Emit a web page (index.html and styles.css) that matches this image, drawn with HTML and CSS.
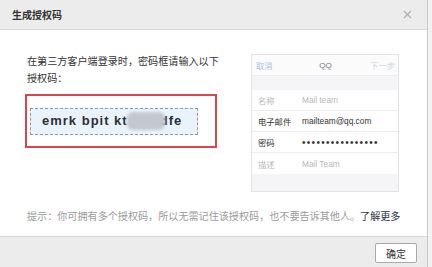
FILE: index.html
```html
<!DOCTYPE html>
<html lang="zh-CN">
<head>
<meta charset="utf-8">
<link rel="stylesheet" href="styles.css">
</head>
<body>
<div class="dialog">
  <div class="dlg-header">
    <span class="dlg-title">生成授权码</span>
    <svg class="dlg-close" width="9" height="9" viewBox="0 0 9 9"><path d="M1 1L8 8M8 1L1 8" stroke="#b0b0b0" stroke-width="1.2" fill="none"/></svg>
  </div>
  <div class="dlg-body">
    <div class="main">
      <div class="left">
        <p class="intro">在第三方客户端登录时，密码框请输入以下授权码：</p>
        <div class="code-frame">
          <div class="code-box"><span class="code-text">emrk bpit kt<span class="blob"></span>dfe</span></div>
        </div>
      </div>
      <div class="phone">
        <div class="phone-bar">
          <span class="bar-cancel">取消</span>
          <span class="bar-title">QQ</span>
          <span class="bar-next">下一步</span>
        </div>
        <div class="phone-gap"></div>
        <div class="row muted"><span class="lbl">名称</span><span class="val">Mail team</span></div>
        <div class="row"><span class="lbl">电子邮件</span><span class="val">mailteam@qq.com</span></div>
        <div class="row"><span class="lbl">密码</span><span class="val dots">••••••••••••••••</span></div>
        <div class="row muted last"><span class="lbl">描述</span><span class="val">Mail Team</span></div>
      </div>
    </div>
    <p class="hint">提示：你可拥有多个授权码，所以无需记住该授权码，也不要告诉其他人。<a class="more">了解更多</a></p>
  </div>
  <div class="dlg-footer">
    <button class="btn-ok">确定</button>
  </div>
</div>
</body>
</html>
```
FILE: styles.css
```css
* { box-sizing: border-box; }
html, body { margin: 0; padding: 0; }
body {
  background: #f2f2f2;
  font-family: "Noto Sans CJK SC", "Liberation Sans", sans-serif;
  width: 432px;
  height: 267px;
  overflow: hidden;
}
.dialog {
  width: 428px;
  height: 267px;
  background: #fff;
  border-right: 1px solid #c9c9c9;
  display: flex;
  flex-direction: column;
}
.dlg-header {
  height: 30px;
  background: #ececec;
  border-bottom: 1px solid #d6d6d6;
  display: flex;
  align-items: center;
  justify-content: space-between;
  padding: 0 12px 0 12px;
}
.dlg-title {
  font-size: 10px;
  font-weight: bold;
  color: #333;
}
.dlg-close { margin-right: 3px; }
.dlg-body {
  height: 206px;
  display: flex;
  flex-direction: column;
}
.main {
  display: flex;
  align-items: flex-start;
}
.left {
  margin-left: 25px;
  margin-top: 22px;
  width: 196px;
}
.intro {
  margin: 0;
  padding-left: 2px;
  font-size: 10.1px;
  line-height: 17px;
  color: #333;
}
.code-frame {
  margin-top: 8px;
  width: 192px;
  height: 54px;
  border: 2px solid #d9474c;
  padding: 12px 17px 0 3px;
}
.code-box {
  width: 168px;
  height: 27px;
  border: 1px dashed #8a9aab;
  background: #eaf3fa;
  display: flex;
  align-items: center;
  padding-left: 11px;
}
.code-text {
  font-family: "Liberation Sans", sans-serif;
  font-weight: bold;
  font-size: 13px;
  letter-spacing: 1px;
  color: #2b2f36;
  white-space: nowrap;
}
.blob {
  display: inline-block;
  width: 38px;
  height: 18px;
  margin-left: -1px;
  margin-right: -5px;
  vertical-align: middle;
  background: #c3c8cd;
  border-radius: 6px;
  filter: blur(1.5px);
  position: relative;
  z-index: 1;
  top: -1px;
}
.phone {
  margin-left: auto;
  margin-right: 28px;
  margin-top: 24px;
  width: 148px;
  height: 138px;
  border: 1px solid #e4e4e4;
  background: #f5f5f7;
  font-family: "Liberation Sans", "Noto Sans CJK SC", sans-serif;
  font-size: 8.3px;
}
.phone-bar {
  height: 21px;
  background: #fbfbfc;
  border-bottom: 1px solid #ececec;
  display: flex;
  align-items: center;
  justify-content: space-between;
  padding: 0 3px 0 4px;
}
.bar-cancel { color: #a8c4da; width: 30px; }
.bar-title { color: #777; font-size: 8px; }
.bar-next { color: #c9d5e0; width: 30px; text-align: right; }
.phone-gap { height: 14px; }
.row {
  height: 21px;
  background: #fff;
  border-bottom: 1px solid #ececec;
  display: flex;
  align-items: center;
  padding-left: 6px;
  color: #333;
}
.row.last { border-bottom: none; }
.row.muted { color: #b8b8b8; }
.lbl { width: 44px; }
.dots { font-size: 10px; letter-spacing: 1.3px; }
.hint {
  margin: 16px 0 0 27px;
  font-size: 10.1px;
  line-height: 16px;
  color: #9a9a9a;
  white-space: nowrap;
}
.more { color: #2a3340; }
.dlg-footer {
  height: 31px;
  background: #ececec;
  border-top: 1px solid #d6d6d6;
  display: flex;
  justify-content: flex-end;
  padding: 6px 10px 0 0;
}
.btn-ok {
  width: 42px;
  height: 20px;
  background: #fff;
  border: 1px solid #a9a9a9;
  border-radius: 2px;
  font-family: "Noto Sans CJK SC", sans-serif;
  font-size: 10px;
  color: #333;
  padding: 0;
}
```
